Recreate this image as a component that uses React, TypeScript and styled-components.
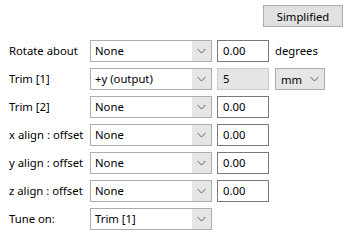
import React from 'react';
import styled, { createGlobalStyle } from 'styled-components';

const GlobalStyle = createGlobalStyle`
  body {
    margin: 0;
    background: #ffffff;
    font-family: "Noto Sans", "Liberation Sans", sans-serif;
    font-size: 11.3px;
    color: #000000;
  }
`;

const Panel = styled.div`
  width: 352px;
  height: 249px;
  box-sizing: border-box;
  padding: 5px 9px 0 9px;
  display: flex;
  flex-direction: column;
`;

const Header = styled.div`
  display: flex;
  justify-content: flex-end;
  margin-bottom: 13px;
`;

const Button = styled.div`
  width: 80px;
  height: 22px;
  box-sizing: border-box;
  background: #e1e1e1;
  border: 1px solid #adadad;
  display: flex;
  align-items: center;
  justify-content: center;
`;

const Form = styled.div`
  display: grid;
  grid-template-columns: 81px 122px 57px auto;
  grid-auto-rows: 22px;
  row-gap: 6px;
  align-items: center;
`;

const Label = styled.div`
  white-space: nowrap;
  line-height: 22px;
`;

const Combo = styled.div`
  width: 122px;
  height: 22px;
  box-sizing: border-box;
  border: 1px solid #adadad;
  display: flex;
  background: #ffffff;
`;

const ComboText = styled.div`
  flex: 1;
  padding-left: 4px;
  line-height: 20px;
`;

const ComboButton = styled.div`
  width: 19px;
  background: #e5e5e5;
  display: flex;
  align-items: center;
  justify-content: center;
`;

const Field = styled.div<{ $disabled?: boolean }>`
  margin-left: 5px;
  width: 52px;
  height: 22px;
  box-sizing: border-box;
  border: 1px solid ${(p) => (p.$disabled ? '#cccccc' : '#7a7a7a')};
  background: ${(p) => (p.$disabled ? '#e5e5e5' : '#ffffff')};
  padding-left: 5px;
  line-height: 20px;
`;

const Unit = styled.div`
  margin-left: 6px;
  line-height: 22px;
`;

const UnitCombo = styled.div`
  margin-left: 6px;
  width: 50px;
  height: 22px;
  box-sizing: border-box;
  border: 1px solid #adadad;
  background: #e5e5e5;
  display: flex;
  align-items: center;
  padding-left: 5px;
`;

const UnitText = styled.span`
  flex: 1;
`;

const UnitArrow = styled.span`
  width: 19px;
  display: flex;
  justify-content: center;
`;

const Chevron = () => (
  <svg width="9" height="6" viewBox="0 0 9 6">
    <path d="M0.5 1 L4.5 5 L8.5 1" fill="none" stroke="#606060" strokeWidth="1" />
  </svg>
);

const Dropdown = ({ value }: { value: string }) => (
  <Combo>
    <ComboText>{value}</ComboText>
    <ComboButton>
      <Chevron />
    </ComboButton>
  </Combo>
);

const rows = ['Trim [2]', 'x align : offset', 'y align : offset', 'z align : offset'];

const App = () => (
  <Panel>
    <GlobalStyle />
    <Header>
      <Button>Simplified</Button>
    </Header>
    <Form>
      <Label>Rotate about</Label>
      <Dropdown value="None" />
      <Field>0.00</Field>
      <Unit>degrees</Unit>

      <Label>Trim [1]</Label>
      <Dropdown value="+y (output)" />
      <Field $disabled>5</Field>
      <UnitCombo>
        <UnitText>mm</UnitText>
        <UnitArrow>
          <Chevron />
        </UnitArrow>
      </UnitCombo>

      {rows.map((label) => (
        <React.Fragment key={label}>
          <Label>{label}</Label>
          <Dropdown value="None" />
          <Field>0.00</Field>
          <div />
        </React.Fragment>
      ))}

      <Label>Tune on:</Label>
      <Dropdown value="Trim [1]" />
      <div />
      <div />
    </Form>
  </Panel>
);

export default App;
